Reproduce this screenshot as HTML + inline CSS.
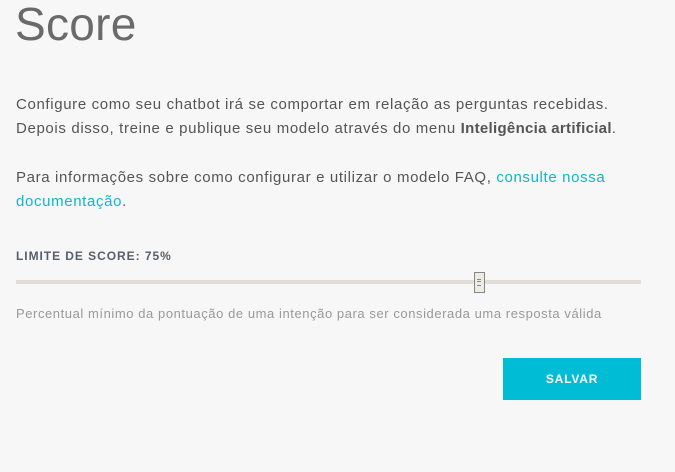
<!DOCTYPE html>
<html><head><meta charset="utf-8"><style>
body{margin:0;width:675px;height:472px;background:#f6f7f6;font-family:"Liberation Sans",sans-serif;color:#555;position:relative;overflow:hidden}
.t{position:absolute;left:16px;white-space:nowrap}
h1{position:absolute;left:15px;top:-3px;margin:0;font-weight:normal;font-size:46px;color:#6a6a6a;letter-spacing:0.3px;font-family:"Liberation Sans",sans-serif}
.p{font-size:15px;letter-spacing:0.64px;color:#555;line-height:24px}
a{color:#12b5cb;text-decoration:none}
b{font-weight:bold;color:#555;letter-spacing:0.3px}
</style></head><body>
<h1>Score</h1>
<div class="t p" style="top:93px">Configure como seu chatbot irá se comportar em relação as perguntas recebidas.<br>Depois disso, treine e publique seu modelo através do menu <b>Inteligência artificial</b>.</div>
<div class="t p" style="top:166px">Para informações sobre como configurar e utilizar o modelo FAQ, <a>consulte nossa</a><br><a>documentação</a>.</div>
<div class="t" style="top:249px;font-size:12px;font-weight:bold;color:#56606a;letter-spacing:0.95px">LIMITE DE SCORE: 75%</div>
<div style="position:absolute;left:16px;top:280px;width:625px;height:4px;background:#e2ddd7"></div>
<div style="position:absolute;left:474px;top:272px;width:9px;height:19px;border:1px solid #8a8580;background:#eeebe7;box-sizing:content-box"></div>
<div style="position:absolute;left:477px;top:279px;width:4px;height:5px;border-top:1px solid #888;border-bottom:1px solid #888"></div>
<div style="position:absolute;left:477px;top:281px;width:4px;height:1px;background:#888"></div>
<div class="t" style="top:306px;font-size:13px;color:#999;letter-spacing:0.57px">Percentual mínimo da pontuação de uma intenção para ser considerada uma resposta válida</div>
<div style="position:absolute;left:503px;top:358px;width:138px;height:42px;background:#00bcd4;color:#fff;font-size:12px;font-weight:bold;letter-spacing:0.8px;text-align:center;line-height:42px">SALVAR</div>
</body></html>
